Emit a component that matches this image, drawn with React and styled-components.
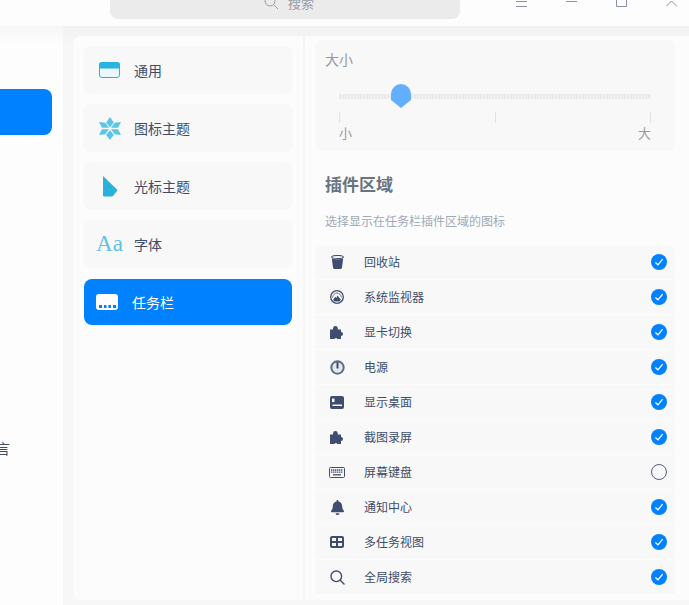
import React from "react";
import styled, { createGlobalStyle } from "styled-components";
import { FaBell } from "react-icons/fa";

const Global = createGlobalStyle`
  html, body { margin: 0; padding: 0; background: #f7f7f7; }
  * { box-sizing: border-box; }
  body { font-family: "Noto Sans CJK SC", "Noto Sans", sans-serif; }
`;

const Page = styled.div`
  width: 689px; height: 605px; overflow: hidden;
  display: flex; flex-direction: column; background: #f7f7f7;
`;
const TitleBar = styled.header`
  height: 26px; flex: none; background: #fdfdfd; overflow: hidden;
  display: flex; align-items: flex-end; padding: 0 0 7px 110px;
`;
const SearchBox = styled.div`
  width: 350px; height: 36px; flex: none; background: #ebebeb; border-radius: 8px;
  display: flex; align-items: center; justify-content: center; gap: 9px; padding: 2px 0 0 8px;
  color: #9a9fa8; font-size: 13px;
`;
const WinButtons = styled.div`
  display: flex; margin-left: 36px; flex: none; height: 22px; align-items: flex-end; margin-bottom: -7px; padding-bottom: 19px;
`;
const WinButton = styled.div`
  width: 50px; display: flex; justify-content: center; color: #8a91a3;
  svg { display: block; }
`;
const Body = styled.div`
  flex: 1; display: flex; min-height: 0;
  background: linear-gradient(#f2f2f2 0, #f7f7f7 24px);
`;
const Sidebar = styled.aside`
  width: 63px; flex: none; overflow: hidden;
  background: linear-gradient(#f6f6f6 0, #fdfdfd 18px);
  padding-top: 63px; display: flex; flex-direction: column;
`;
const SideActive = styled.div`
  height: 46px; width: 52px; flex: none; background: #0081ff; border-radius: 0 8px 8px 0;
`;
const SideText = styled.div`
  margin-top: 303px; width: 63px; display: flex; justify-content: flex-start;
  font-size: 14px; line-height: 20px; color: #414d68;
  span { margin-left: -18px; white-space: nowrap; }
`;
const NavPanel = styled.nav`
  width: 230px; margin: 10px 0 5px 10px; flex: none; background: #fcfcfc;
  border-radius: 8px 0 0 8px; padding: 10px; display: flex; flex-direction: column; gap: 10px;
`;
const NavItem = styled.div`
  height: ${p => (p.$active ? "46px" : "48px")};
  margin: ${p => (p.$active ? "1px" : "0")};
  background: ${p => (p.$active ? "#0081ff" : "#f8f8f8")};
  color: ${p => (p.$active ? "#ffffff" : "#414d68")};
  border-radius: 8px; font-size: 14px; flex: none;
  display: flex; align-items: center; padding-left: ${p => (p.$active ? "12px" : "14px")};
`;
const NavIcon = styled.div`
  width: ${p => (p.$active ? "36px" : "37px")}; flex: none; display: flex; align-items: center;
  justify-content: ${p => (p.$active ? "flex-start" : "center")};
  padding-right: ${p => (p.$active ? "0" : "12px")};
  svg { display: block; }
`;
const AaIcon = styled.span`
  font-family: "Liberation Serif", serif; font-size: 23px; line-height: 24px; color: #5cc3e6; font-weight: 400;
  white-space: nowrap;
`;
const Content = styled.main`
  margin: 10px 0 5px 2px; flex: 1; background: #fcfcfc; padding: 4px 14px 0 10px; overflow: hidden;
`;
const SliderCard = styled.section`
  height: 111px; background: #f8f8f8; border-radius: 8px; padding: 9px 24px 0 10px;
`;
const SliderTitle = styled.div`
  font-size: 14px; line-height: 20px; color: #9a9a9a;
`;
const SliderArea = styled.div`
  margin: 0 0 0 14px; width: 312px; position: relative;
`;
const Track = styled.div`
  margin-top: 15px; height: 24px; display: flex; align-items: center; position: relative;
  &::before {
    content: ""; display: block; width: 312px; height: 5px;
    background: repeating-linear-gradient(90deg, #e9e9e9 0 2px, #f4f4f4 2px 3px);
  }
`;
const Thumb = styled.svg`
  position: absolute; left: 52px; top: 0;
`;
const Ticks = styled.div`
  display: flex; justify-content: space-between; margin-top: 4px;
`;
const Tick = styled.i`
  width: 1px; height: 11px; background: #e2e2e2; display: block;
`;
const ScaleLabels = styled.div`
  display: flex; justify-content: space-between; font-size: 13px; line-height: 18px; color: #9a9a9a;
  margin-top: 1px;
`;
const SectionTitle = styled.h2`
  margin: 21px 0 0 10px; font-size: 17px; line-height: 24px; font-weight: 700; color: #6a7480;
`;
const SectionSub = styled.p`
  margin: 16px 0 0 10px; font-size: 12px; line-height: 18px; color: #a0a9b6;
`;
const List = styled.ul`
  list-style: none; margin: 15px 0 0; padding: 0; border-radius: 8px 8px 0 0; overflow: hidden;
`;
const Row = styled.li`
  height: 35px; background: #f8f8f8; border-bottom: 1px solid #fcfcfc;
  display: flex; align-items: center; padding: 0 8px 0 14px; font-size: 12px; color: #414d68;
`;
const RowIcon = styled.div`
  width: 16px; height: 18px; margin-right: 19px; flex: none; display: flex; align-items: center; justify-content: center; color: #3f4d6e;
  svg { display: block; }
`;
const RowLabel = styled.span`
  flex: 1; margin-bottom: 2px;
`;

const Check = ({ on }) =>
  on ? (
    <svg width="16" height="16" viewBox="0 0 16 16">
      <circle cx="8" cy="8" r="8" fill="#0081ff" />
      <path d="M4.4 8.4 7 10.8 11.6 5.2" fill="none" stroke="#fff" strokeWidth="1.3" />
    </svg>
  ) : (
    <svg width="16" height="16" viewBox="0 0 16 16">
      <circle cx="8" cy="8" r="7.5" fill="none" stroke="#535d78" strokeWidth="1" />
    </svg>
  );

const Trash = () => (
  <svg width="13" height="14" viewBox="0 0 13 14">
    <ellipse cx="6.5" cy="2" rx="5.800" ry="1.500" fill="none" stroke="currentColor" strokeWidth="1.100" />
    <path d="M.8 3.300C3 4.700 10 4.700 12.200 3.300L11 12.500C10.800 13.500 10 14 9 14H4C3 14 2.200 13.500 2 12.500Z" fill="currentColor" />
  </svg>
);
const Monitor = () => (
  <svg width="14" height="14" viewBox="0 0 14 14">
    <circle cx="7" cy="7" r="6.300" fill="none" stroke="currentColor" strokeWidth="1.300" />
    <path d="M2.500 7.500C3 4.500 5 3 7 3s4 1.500 4.500 4.500" fill="none" stroke="#6d7891" strokeWidth="1" />
    <path d="M3 10 5.200 6.800 6.300 8 7.500 5.500 11 10 9.200 11.600H4.800Z" fill="currentColor" />
  </svg>
);
const Power = () => (
  <svg width="15" height="15" viewBox="0 0 15 15">
    <circle cx="7.500" cy="7.500" r="6.200" fill="#e4e7ec" stroke="#5e6a86" strokeWidth="2" />
    <path d="M7.500 2v6.500" stroke="currentColor" strokeWidth="2" />
  </svg>
);
const Desktop = () => (
  <svg width="14" height="13" viewBox="0 0 14 13">
    <path fillRule="evenodd" d="M2 0h10a2 2 0 0 1 2 2v9a2 2 0 0 1-2 2H2a2 2 0 0 1-2-2V2a2 2 0 0 1 2-2ZM2 2.500V6h2.500V2.500ZM2.500 8.500V10h9.500V8.500Z" fill="currentColor" />
  </svg>
);
const Keyboard = () => (
  <svg width="16" height="11" viewBox="0 0 16 11">
    <rect x=".5" y=".5" width="15" height="10" rx="1" fill="none" stroke="currentColor" />
    <path d="M2 3h12M2 5.200h12" stroke="currentColor" strokeWidth="1.300" strokeDasharray="1.400 .6" />
    <path d="M4 7.800h8" stroke="currentColor" strokeWidth="1.300" />
  </svg>
);
const Grid = () => (
  <svg width="14" height="12" viewBox="0 0 14 12">
    <path fillRule="evenodd" d="M2 0h10a2 2 0 0 1 2 2v8a2 2 0 0 1-2 2H2a2 2 0 0 1-2-2V2a2 2 0 0 1 2-2ZM2 2v3h4V2Zm6 0v3h4V2ZM2 7v3h4V7Zm6 0v3h4V7Z" fill="currentColor" />
  </svg>
);
const Search = () => (
  <svg width="15" height="15" viewBox="0 0 15 15" fill="none" stroke="currentColor" strokeWidth="1.400">
    <circle cx="6.300" cy="6.300" r="5.300" /><path d="M10 10l4.500 4.500" />
  </svg>
);
const Puzzle = () => (
  <svg width="15" height="13" viewBox="0 0 15 13">
    <path d="M3 2.500a2.400 2.400 0 1 1 4.800 0V3.500H11V6a2 2 0 1 1 0 4v3H7.300a1.500 1.500 0 0 0-2.800 0H0V3.500H3Z" fill="currentColor" />
  </svg>
);
const Bell = () => <FaBell size={15} />;

const rows = [
  ["回收站", Trash, 1], ["系统监视器", Monitor, 1], ["显卡切换", Puzzle, 1], ["电源", Power, 1],
  ["显示桌面", Desktop, 1], ["截图录屏", Puzzle, 1], ["屏幕键盘", Keyboard, 0], ["通知中心", Bell, 1],
  ["多任务视图", Grid, 1], ["全局搜索", Search, 1],
];

const GeneralIcon = () => (
  <svg width="21" height="16" viewBox="0 0 21 16">
    <rect x=".5" y=".5" width="20" height="15" rx="2.500" fill="#eaf7fc" stroke="#2bb3df" />
    <path d="M3 0h15a3 3 0 0 1 3 3v3.500H0V3a3 3 0 0 1 3-3Z" fill="#2bb3df" />
  </svg>
);
const FlowerIcon = () => (
  <svg width="22" height="23" viewBox="0 0 22 23" fill="#5cc5e6">
    <path d="M11 0l3.800 5.500L11 10.500 7.200 5.500Z" /><path d="M11 23l3.800-5L11 13 7.200 18Z" />
    <path d="M0 5l6.300.7L10 10.800H3Z" /><path d="M22 5l-6.300.7L12 10.800h7Z" />
    <path d="M0 18l6.300-.7L10 12.300H3Z" /><path d="M22 18l-6.300-.7L12 12.300h7Z" />
  </svg>
);
const CursorIcon = () => (
  <svg width="16" height="22" viewBox="0 0 16 22">
    <path d="M1 1l14 13.500c.4.500.4 1 0 1.500l-4 5c-.3.300-.6.500-1 .5H2a1 1 0 0 1-1-1Z" fill="#2ab2de" />
  </svg>
);
const TaskbarIcon = () => (
  <svg width="22" height="16" viewBox="0 0 22 16">
    <path fillRule="evenodd" d="M3 0h16a3 3 0 0 1 3 3v10a3 3 0 0 1-3 3H3a3 3 0 0 1-3-3V3a3 3 0 0 1 3-3ZM3 11v3h3v-3Zm5 0v3h2.500v-3Zm4.500 0v3H15v-3Zm4.500 0v3h3v-3Z" fill="#fff" />
  </svg>
);

export default function App() {
  return (
    <Page>
      <Global />
      <TitleBar>
        <SearchBox>
          <svg width="15" height="15" viewBox="0 0 15 15" fill="none" stroke="#9a9fa8" strokeWidth="1"><circle cx="6" cy="6" r="5" /><path d="M10 10l4 4" /></svg>
          <span>搜索</span>
        </SearchBox>
        <WinButtons>
          <WinButton><svg width="11" height="7" viewBox="0 0 11 7"><path d="M0 1.500h11M0 6.500h11" stroke="currentColor" /></svg></WinButton>
          <WinButton><svg width="11" height="7" viewBox="0 0 11 7"><path d="M0 1.500h11" stroke="currentColor" /></svg></WinButton>
          <WinButton><svg width="11" height="7" viewBox="0 0 11 7"><path d="M.5 0v6.500h10V0" stroke="currentColor" fill="none" /></svg></WinButton>
          <WinButton><svg width="11" height="7" viewBox="0 0 11 7"><path d="M0 6.500 5.500 1 11 6.500" stroke="currentColor" fill="none" /></svg></WinButton>
        </WinButtons>
      </TitleBar>
      <Body>
        <Sidebar>
          <SideActive />
          <SideText><span>语言</span></SideText>
        </Sidebar>
        <NavPanel>
          <NavItem><NavIcon><GeneralIcon /></NavIcon>通用</NavItem>
          <NavItem><NavIcon><FlowerIcon /></NavIcon>图标主题</NavItem>
          <NavItem><NavIcon><CursorIcon /></NavIcon>光标主题</NavItem>
          <NavItem><NavIcon><AaIcon>Aa</AaIcon></NavIcon>字体</NavItem>
          <NavItem $active><NavIcon $active><TaskbarIcon /></NavIcon>任务栏</NavItem>
        </NavPanel>
        <Content>
          <SliderCard>
            <SliderTitle>大小</SliderTitle>
            <SliderArea>
              <Track>
                <Thumb width="20" height="24" viewBox="0 0 20 24"><path d="M0 10a10 10 0 0 1 20 0v6l-10 8-10-8Z" fill="#62aeff" /></Thumb>
              </Track>
              <Ticks><Tick /><Tick /><Tick /></Ticks>
              <ScaleLabels><span>小</span><span>大</span></ScaleLabels>
            </SliderArea>
          </SliderCard>
          <SectionTitle>插件区域</SectionTitle>
          <SectionSub>选择显示在任务栏插件区域的图标</SectionSub>
          <List>
            {rows.map(([label, Icon, on]) => (
              <Row key={label}>
                <RowIcon><Icon /></RowIcon>
                <RowLabel>{label}</RowLabel>
                <Check on={!!on} />
              </Row>
            ))}
          </List>
        </Content>
      </Body>
    </Page>
  );
}
